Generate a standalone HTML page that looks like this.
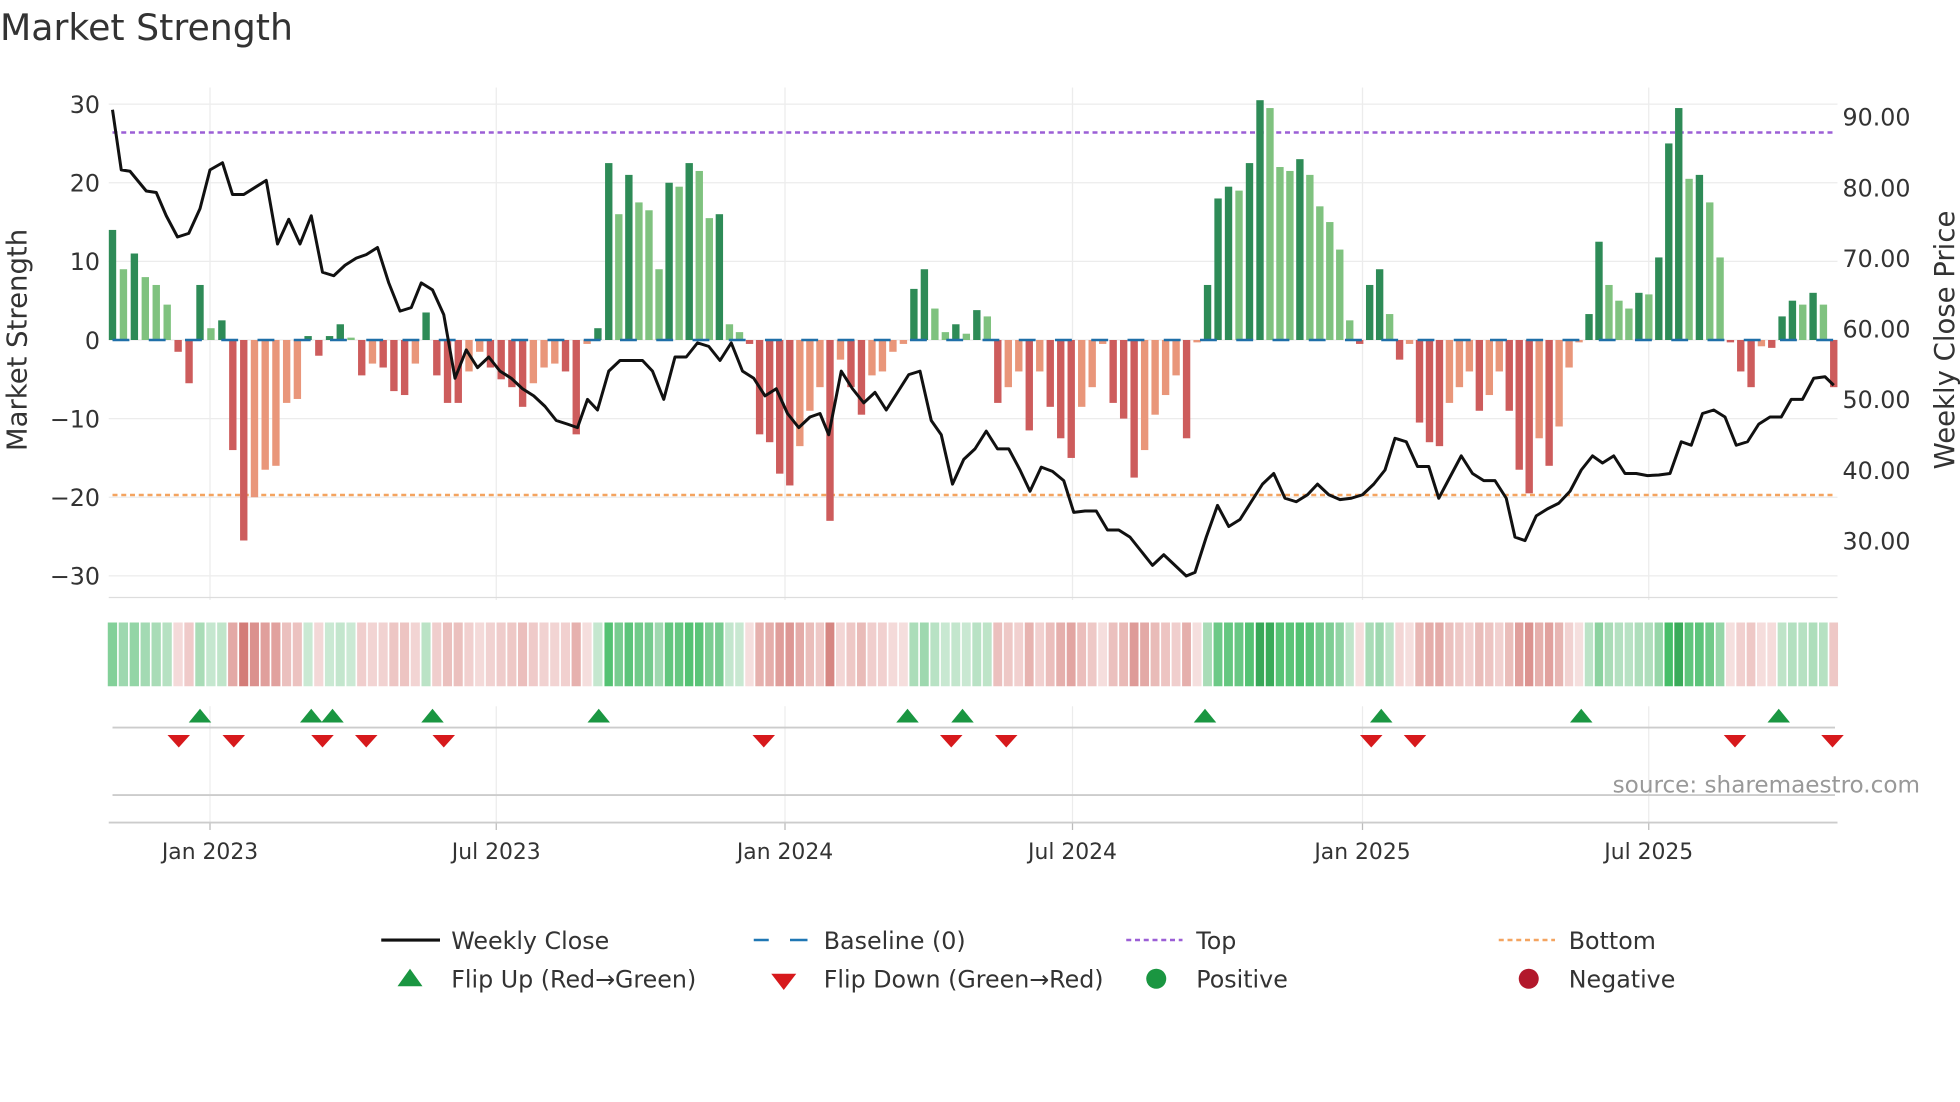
<!DOCTYPE html>
<html><head><meta charset="utf-8"><style>
html,body{margin:0;padding:0;background:#fff;width:1960px;height:1102px;overflow:hidden}
svg{display:block}
text{font-family:"DejaVu Sans","Liberation Sans",sans-serif;fill:#333}
</style></head><body>
<svg id="s" width="1960" height="1102" viewBox="0 0 1568 881.6" xmlns="http://www.w3.org/2000/svg">
<text x="0" y="32" font-size="29">Market Strength</text>
<g id="grid"></g>
<g id="bars"></g>
<g id="strip"></g>
<g id="marks"></g>
<text x="1536" y="634" font-size="18.5" text-anchor="end" style="fill:#999">source: sharemaestro.com</text>
<text transform="translate(21,272) rotate(-90)" font-size="22" text-anchor="middle">Market Strength</text>
<text transform="translate(1563,272) rotate(-90)" font-size="22" text-anchor="middle">Weekly Close Price</text>
<g font-size="19">
<line x1="305" y1="752" x2="352" y2="752" stroke="#111" stroke-width="2.5"/>
<text x="361" y="759">Weekly Close</text>
<line x1="603" y1="752" x2="615" y2="752" stroke="#1f77b4" stroke-width="2"/><line x1="632" y1="752" x2="646" y2="752" stroke="#1f77b4" stroke-width="2"/>
<text x="659" y="759">Baseline (0)</text>
<line x1="901" y1="752" x2="946" y2="752" stroke="#9b5fd6" stroke-width="2" stroke-dasharray="4,3"/>
<text x="957" y="759">Top</text>
<line x1="1199" y1="752" x2="1244" y2="752" stroke="#f4a460" stroke-width="2" stroke-dasharray="4,3"/>
<text x="1255" y="759">Bottom</text>
<polygon points="318,789 338,789 328,775" fill="#1a9641"/>
<text x="361" y="790">Flip Up (Red→Green)</text>
<polygon points="617,779 637,779 627,792" fill="#d7191c"/>
<text x="659" y="790">Flip Down (Green→Red)</text>
<circle cx="925" cy="783" r="8" fill="#1a9641"/>
<text x="957" y="790">Positive</text>
<circle cx="1223" cy="783" r="8" fill="#b2182b"/>
<text x="1255" y="790">Negative</text>
</g>
</svg>
<script>
const NS="http://www.w3.org/2000/svg";
function el(p,t,a){const e=document.createElementNS(NS,t);for(const k in a)e.setAttribute(k,a[k]);document.getElementById(p).appendChild(e);return e;}
const yv=v=>272-6.29*v, yp=p=>263-5.65*(p-60);
[30,20,10,0,-10,-20,-30].forEach(v=>{el("grid","line",{x1:87,x2:1470,y1:yv(v),y2:yv(v),stroke:"#ececec","stroke-width":1});
 const t=el("grid","text",{x:80,y:yv(v)+7,"font-size":19,"text-anchor":"end"});t.textContent=(v<0?"\u2212"+(-v):v);});
[90,80,70,60,50,40,30].forEach(p=>{const t=el("grid","text",{x:1474,y:yp(p)+7,"font-size":19});t.textContent=p.toFixed(2);});
const dx=[[168,"Jan 2023"],[397,"Jul 2023"],[628,"Jan 2024"],[858,"Jul 2024"],[1090,"Jan 2025"],[1319,"Jul 2025"]];
dx.forEach(d=>{el("grid","line",{x1:d[0],x2:d[0],y1:70,y2:480,stroke:"#ececec"});
 el("grid","line",{x1:d[0],x2:d[0],y1:565,y2:658,stroke:"#ececec"});
 el("grid","line",{x1:d[0],x2:d[0],y1:658,y2:664,stroke:"#bbb"});
 const t=el("grid","text",{x:d[0],y:687,"font-size":17.5,"text-anchor":"middle"});t.textContent=d[1];});
el("grid","line",{x1:90,x2:1468,y1:582,y2:582,stroke:"#ccc","stroke-width":1.5});
el("grid","line",{x1:90,x2:1468,y1:636,y2:636,stroke:"#ccc","stroke-width":1.5});
el("grid","line",{x1:87,x2:1470,y1:658,y2:658,stroke:"#ccc","stroke-width":1.5});
el("grid","line",{x1:87,x2:1470,y1:478,y2:478,stroke:"#ddd"});
const V=[14,9,11,8,7,4.5,-1.5,-5.5,7,1.5,2.5,-14,-25.5,-20,-16.5,-16,-8,-7.5,0.5,-2,0.5,2,0.3,-4.5,-3,-3.5,-6.5,-7,-3,3.5,-4.5,-8,-8,-4,-1.5,-3.5,-5,-6,-8.5,-5.5,-3.5,-3,-4,-12,-0.5,1.5,22.5,16,21,17.5,16.5,9,20,19.5,22.5,21.5,15.5,16,2,1,-0.5,-12,-13,-17,-18.5,-13.5,-9,-6,-23,-2.5,-6,-9.5,-4.5,-4,-1.5,-0.5,6.5,9,4,1,2,0.8,3.8,3,-8,-6,-4,-11.5,-4,-8.5,-12.5,-15,-8.5,-6,-0.5,-8,-10,-17.5,-14,-9.5,-7,-4.5,-12.5,-0.3,7,18,19.5,19,22.5,30.5,29.5,22,21.5,23,21,17,15,11.5,2.5,-0.5,7,9,3.3,-2.5,-0.5,-10.5,-13,-13.5,-8,-6,-4,-9,-7,-4,-9,-16.5,-19.5,-12.5,-16,-11,-3.5,-0.3,3.3,12.5,7,5,4,6,5.8,10.5,25,29.5,20.5,21,17.5,10.5,-0.3,-4,-6,-0.8,-1,3,5,4.5,6,4.5,-6];
const n=V.length;
const A=[[0,90],[12,195],[43,461],[46,487],[68,664],[109,1008],[151,1343],[n-1,1467]];
function X(i){for(let k=0;k<A.length-1;k++){const a=A[k],b=A[k+1];if(i<=b[0])return a[1]+(b[1]-a[1])*(i-a[0])/(b[0]-a[0]);}return 1467;}
const w=5.9;
el("bars","line",{x1:90,x2:1468,y1:106,y2:106,stroke:"#9b5fd6","stroke-width":2,"stroke-dasharray":"4,3"});
el("bars","line",{x1:90,x2:1468,y1:396,y2:396,stroke:"#f4a460","stroke-width":2,"stroke-dasharray":"4,3"});
V.forEach((v,i)=>{const x=X(i), pv=i?V[i-1]:0;
 const strong=(Math.sign(v)==Math.sign(pv)?Math.abs(v)>=Math.abs(pv):true);
 const c=v>=0?(strong?"#2e8b57":"#7fc27f"):(strong?"#cd5c5c":"#e9967a");
 el("bars","rect",{x:x-w/2,y:Math.min(yv(v),272),width:w,height:Math.abs(yv(v)-272),fill:c});
 const a=Math.min(1,Math.abs(v)/30);
 let col;
 if(v>=0){col=`hsl(137,${40+10*a}%,${86-42*a}%)`;}
 else{col=`hsl(3,${55-5*a}%,${92-32*a}%)`;}
 const sp=(i<n-1?X(i+1)-x:x-X(i-1));
 el("strip","rect",{x:x-sp/2+0.6,y:498,width:sp-1.3,height:51,fill:col});
});
el("bars","line",{x1:90,x2:1468,y1:272,y2:272,stroke:"#1f6fa8","stroke-width":2,"stroke-dasharray":"13.5,15.5"});
const P=[[90,91],[97,82.5],[104,82.3],[117,79.5],[125,79.3],[133,76],[142,73],[151,73.5],[160,77],[168,82.5],[178,83.5],[186,79],[195,79],[213,81],[222,72],[231,75.5],[240,72],[249,76],[258,68],[267,67.5],[276,69],[285,70],[293,70.5],[302,71.5],[311,66.5],[320,62.5],[329,63],[337,66.5],[346,65.5],[355,62],[364,53],[373,57],[382,54.5],[391,56],[400,54],[409,53],[418,51.5],[427,50.5],[436,49],[445,47],[454,46.5],[462,46],[470,50],[478,48.5],[487,54],[496,55.5],[505,55.5],[514,55.5],[522,54],[531,50],[540,56],[549,56],[558,58],[567,57.5],[576,55.5],[585,58],[594,54],[603,53],[612,50.5],[621,51.5],[630,48],[639,46],[648,47.5],[656,48],[663,45],[673,54],[682,51.5],[691,49.5],[700,51],[709,48.5],[718,51],[727,53.5],[736,54],[745,47],[753,45],[762,38],[771,41.5],[780,43],[789,45.5],[798,43],[807,43],[816,40],[824,37],[833,40.4],[842,39.8],[851,38.5],[859,34],[868,34.2],[877,34.2],[886,31.5],[895,31.5],[904,30.5],[913,28.5],[922,26.5],[931,28],[940,26.5],[949,25],[956,25.5],[965,30.5],[974,35],[983,32],[992,33],[1001,35.5],[1010,38],[1019,39.5],[1028,36],[1037,35.5],[1046,36.5],[1054,38],[1063,36.5],[1072,35.8],[1081,36],[1090,36.5],[1099,38],[1108,40],[1116,44.5],[1125,44],[1134,40.5],[1143,40.5],[1151,36],[1160,39],[1169,42],[1178,39.5],[1187,38.5],[1196,38.5],[1205,36],[1212,30.5],[1220,30],[1229,33.5],[1238,34.5],[1247,35.3],[1256,37],[1265,40],[1274,42],[1282,41],[1291,42],[1300,39.5],[1309,39.5],[1318,39.2],[1327,39.3],[1336,39.5],[1345,44],[1353,43.5],[1362,48],[1371,48.5],[1380,47.5],[1389,43.5],[1398,44],[1407,46.5],[1416,47.5],[1425,47.5],[1433,50],[1442,50],[1451,53],[1460,53.2],[1467,52]];
el("bars","polyline",{points:P.map(p=>p[0]+","+yp(p[1]).toFixed(1)).join(" "),fill:"none",stroke:"#111","stroke-width":2.4,"stroke-linejoin":"round"});
[160,249,266,346,479,726,770,964,1105,1265,1423].forEach(x=>el("marks","polygon",{points:`${x-9},578 ${x+9},578 ${x},567`,fill:"#1a9641"}));
[143,187,258,293,355,611,761,805,1097,1132,1388,1466].forEach(x=>el("marks","polygon",{points:`${x-9},588 ${x+9},588 ${x},598`,fill:"#d7191c"}));
</script>
</body></html>
